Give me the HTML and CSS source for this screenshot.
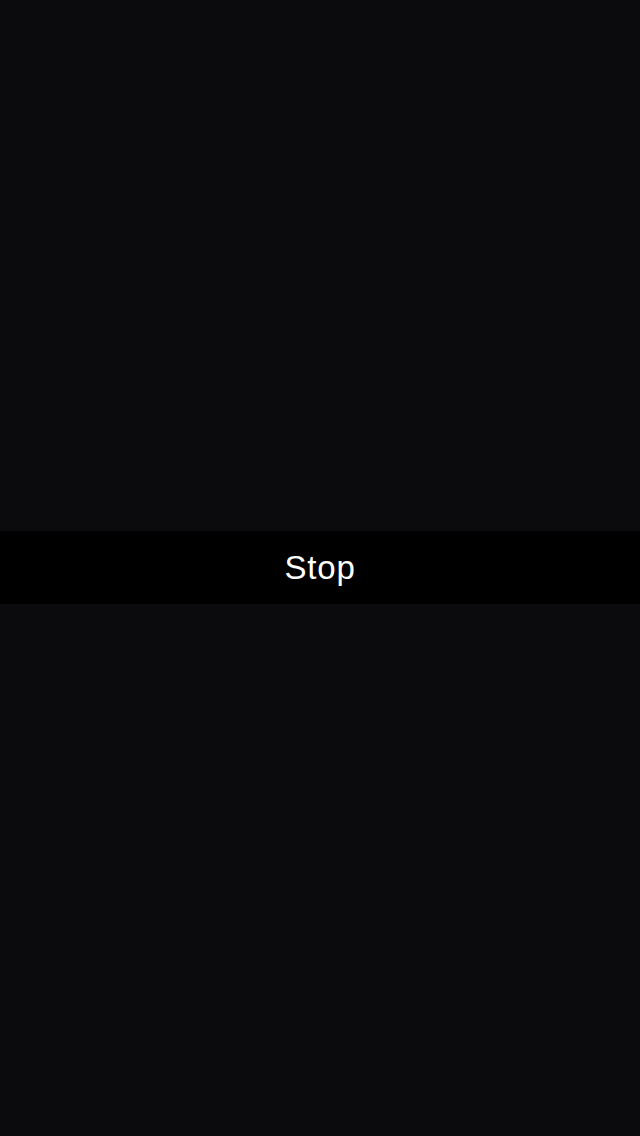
FILE: index.html
```html
<!DOCTYPE html>
<html>
<head>
<meta charset="utf-8">
<link rel="stylesheet" href="styles.css">
</head>
<body>
<div class="screen">
  <div class="spacer-top"></div>
  <div class="bar"><span class="label">Stop</span></div>
  <div class="spacer-bottom"></div>
</div>
</body>
</html>
```
FILE: styles.css
```css
html, body {
  margin: 0;
  padding: 0;
  background: #0b0a0d;
}
.screen {
  width: 640px;
  height: 1136px;
  display: flex;
  flex-direction: column;
  background: #0b0a0d;
}
.spacer-top {
  height: 531px;
  flex: none;
}
.bar {
  height: 73px;
  flex: none;
  background: #000;
  display: flex;
  align-items: center;
  justify-content: center;
}
.label {
  font-family: "Liberation Sans", Arial, sans-serif;
  font-size: 33px;
  letter-spacing: 0.8px;
  color: #fff;
  line-height: 1;
}
.spacer-bottom {
  flex: 1;
}
```
